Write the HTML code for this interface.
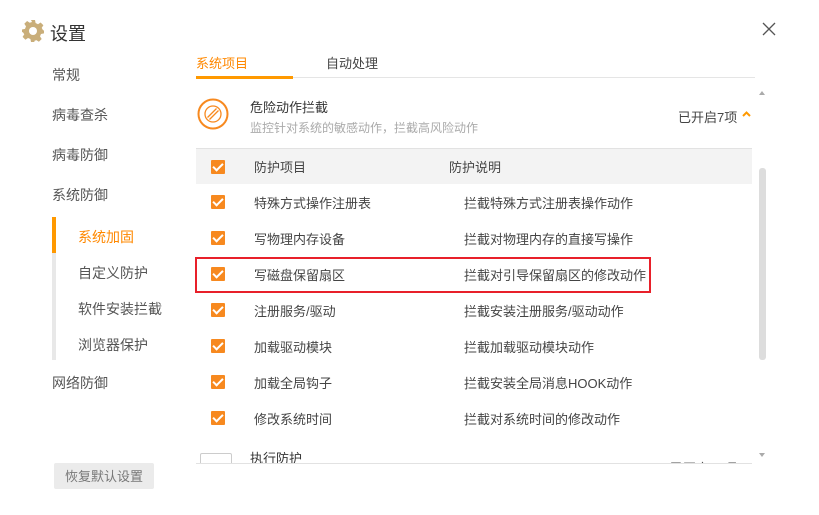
<!DOCTYPE html><html><head><meta charset="utf-8"><style>
body{margin:0;width:819px;height:515px;background:#fff;position:relative;overflow:hidden;font-family:"Liberation Sans","Noto Sans CJK SC",sans-serif;color:#333}
.a{position:absolute;white-space:nowrap}
.cb{position:absolute;width:14px;height:14px;background:#f7891f;border-radius:1px}
.cb:after{content:"";position:absolute;left:4px;top:1px;width:4px;height:8px;border:solid #fff;border-width:0 2px 2px 0;transform:rotate(45deg)}
.t{font-size:13px;color:#444}
</style></head><body>
<svg class="a" style="left:21px;top:19px" width="24" height="24" viewBox="0 0 24 24"><path fill="#c9ae7a" d="M10 1h4l.6 3 2.4 1.2 2.6-1.7 2.8 2.8-1.7 2.6L21.9 11 23 11.6v2.8l-3 .6-1 2.4 1.7 2.6-2.8 2.8-2.6-1.7-2.4 1L14 23h-4l-.6-3-2.4-1-2.6 1.7-2.8-2.8L3.300 15.300 2 13.4 1 13v-2.500l3-.6L5 7.4 3.300 4.800 6.100 2 8.700 3.700 11 3z"/><circle cx="12" cy="12" r="4" fill="#fff"/></svg>
<div class="a" style="left:50px;top:20px;font-size:18px;color:#333">设置</div>
<svg class="a" style="left:762px;top:22px" width="14" height="14"><path d="M1 1L13 13M13 1L1 13" stroke="#555" stroke-width="1.3"/></svg>
<div class="a" style="left:52px;top:65px;font-size:14px;color:#555">常规</div>
<div class="a" style="left:52px;top:105px;font-size:14px;color:#555">病毒查杀</div>
<div class="a" style="left:52px;top:145px;font-size:14px;color:#555">病毒防御</div>
<div class="a" style="left:52px;top:185px;font-size:14px;color:#555">系统防御</div>
<div class="a" style="left:52px;top:217px;width:4px;height:143px;background:#e8e8e8"></div>
<div class="a" style="left:52px;top:217px;width:4px;height:36px;background:#f90"></div>
<div class="a" style="left:78px;top:227px;font-size:14px;color:#f80">系统加固</div>
<div class="a" style="left:78px;top:263px;font-size:14px;color:#555">自定义防护</div>
<div class="a" style="left:78px;top:299px;font-size:14px;color:#555">软件安装拦截</div>
<div class="a" style="left:78px;top:335px;font-size:14px;color:#555">浏览器保护</div>
<div class="a" style="left:52px;top:373px;font-size:14px;color:#555">网络防御</div>
<div class="a" style="left:54px;top:463px;width:100px;height:26px;background:#ebebeb;border-radius:2px;font-size:13px;color:#777;text-align:center;line-height:27px">恢复默认设置</div>
<div class="a" style="left:196px;top:53px;font-size:13px;color:#f80">系统项目</div>
<div class="a" style="left:326px;top:53px;font-size:13px;color:#444">自动处理</div>
<div class="a" style="left:196px;top:77px;width:559px;height:1px;background:#e5e5e5"></div>
<div class="a" style="left:196px;top:76px;width:97px;height:3px;background:#f90"></div>
<svg class="a" style="left:197px;top:98px" width="32" height="32" viewBox="0 0 32 32"><circle cx="16" cy="16" r="14.5" fill="none" stroke="#f7891f" stroke-width="2"/><circle cx="16" cy="16" r="8" fill="none" stroke="#f7891f" stroke-width="1.3"/><path d="M10.500 19.500L19.500 10.500M12.500 21.500L21.500 12.500" stroke="#f7891f" stroke-width="1.3"/></svg>
<div class="a" style="left:250px;top:97px;font-size:13px;color:#333">危险动作拦截</div>
<div class="a" style="left:250px;top:119px;font-size:12px;color:#aaa">监控针对系统的敏感动作，拦截高风险动作</div>
<div class="a" style="left:678px;top:107px;font-size:13px;color:#444">已开启7项</div>
<svg class="a" style="left:742px;top:111px" width="9" height="6"><path d="M1 5L4.500 1.500 8 5" fill="none" stroke="#f90" stroke-width="2"/></svg>
<div class="a" style="left:196px;top:148px;width:556px;height:36px;background:#f3f3f3;border-top:1px solid #e2e2e2;box-sizing:border-box"></div>
<div class="cb" style="left:211px;top:160px"></div>
<div class="a t" style="left:254px;top:157px">防护项目</div>
<div class="a t" style="left:449px;top:157px">防护说明</div>
<div class="cb" style="left:211px;top:195px"></div><div class="a t" style="left:254px;top:193px">特殊方式操作注册表</div><div class="a t" style="left:464px;top:193px">拦截特殊方式注册表操作动作</div>
<div class="cb" style="left:211px;top:231px"></div><div class="a t" style="left:254px;top:229px">写物理内存设备</div><div class="a t" style="left:464px;top:229px">拦截对物理内存的直接写操作</div>
<div class="cb" style="left:211px;top:267px"></div><div class="a t" style="left:254px;top:265px">写磁盘保留扇区</div><div class="a t" style="left:464px;top:265px">拦截对引导保留扇区的修改动作</div>
<div class="cb" style="left:211px;top:303px"></div><div class="a t" style="left:254px;top:301px">注册服务/驱动</div><div class="a t" style="left:464px;top:301px">拦截安装注册服务/驱动动作</div>
<div class="cb" style="left:211px;top:339px"></div><div class="a t" style="left:254px;top:337px">加载驱动模块</div><div class="a t" style="left:464px;top:337px">拦截加载驱动模块动作</div>
<div class="cb" style="left:211px;top:375px"></div><div class="a t" style="left:254px;top:373px">加载全局钩子</div><div class="a t" style="left:464px;top:373px">拦截安装全局消息HOOK动作</div>
<div class="cb" style="left:211px;top:411px"></div><div class="a t" style="left:254px;top:409px">修改系统时间</div><div class="a t" style="left:464px;top:409px">拦截对系统时间的修改动作</div>
<div class="a" style="left:195px;top:257px;width:456px;height:36px;border:2px solid #e8202a;box-sizing:border-box"></div>
<div class="a" style="left:196px;top:445px;width:556px;height:18px;overflow:hidden">
<div class="a" style="left:4px;top:8px;width:30px;height:20px;border:1px solid #ccc;border-radius:2px"></div>
<div class="a" style="left:54px;top:3px;font-size:13px;color:#333">执行防护</div>
<div class="a" style="left:474px;top:13px;font-size:13px;color:#444">已开启10项</div></div>
<div class="a" style="left:196px;top:463px;width:556px;height:1px;background:#e2e2e2"></div>
<div class="a" style="left:759px;top:91px;width:0;height:0;border:3px solid transparent;border-bottom:4px solid #aaa;border-top:0"></div>
<div class="a" style="left:759px;top:168px;width:7px;height:192px;background:#ddd;border-radius:3px"></div>
<div class="a" style="left:759px;top:453px;width:0;height:0;border:3px solid transparent;border-top:4px solid #aaa;border-bottom:0"></div>
</body></html>
